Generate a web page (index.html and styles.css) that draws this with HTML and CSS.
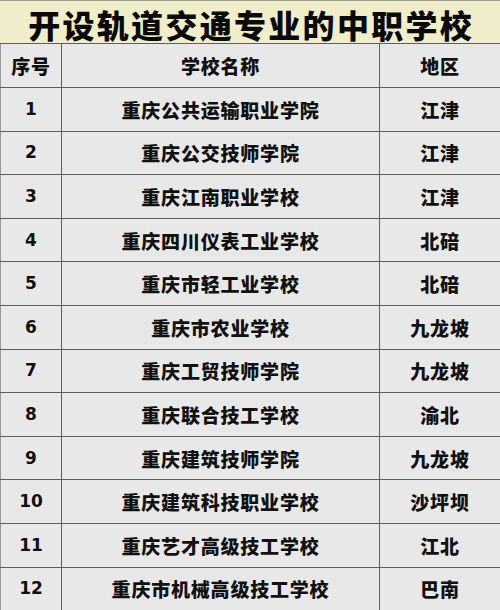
FILE: index.html
```html
<!DOCTYPE html>
<html lang="zh">
<head>
<meta charset="utf-8">
<link rel="stylesheet" href="styles.css">
</head>
<body>
<div class="sheet">
  <h1 class="title">开设轨道交通专业的中职学校</h1>
  <table class="schools">
    <colgroup><col class="c-no"><col class="c-name"><col class="c-area"></colgroup>
    <thead>
      <tr><th>序号</th><th>学校名称</th><th>地区</th></tr>
    </thead>
    <tbody>
      <tr><td class="num">1</td><td>重庆公共运输职业学院</td><td>江津</td></tr>
      <tr><td class="num">2</td><td>重庆公交技师学院</td><td>江津</td></tr>
      <tr><td class="num">3</td><td>重庆江南职业学校</td><td>江津</td></tr>
      <tr><td class="num">4</td><td>重庆四川仪表工业学校</td><td>北碚</td></tr>
      <tr><td class="num">5</td><td>重庆市轻工业学校</td><td>北碚</td></tr>
      <tr><td class="num">6</td><td>重庆市农业学校</td><td>九龙坡</td></tr>
      <tr><td class="num">7</td><td>重庆工贸技师学院</td><td>九龙坡</td></tr>
      <tr><td class="num">8</td><td>重庆联合技工学校</td><td>渝北</td></tr>
      <tr><td class="num">9</td><td>重庆建筑技师学院</td><td>九龙坡</td></tr>
      <tr><td class="num">10</td><td>重庆建筑科技职业学校</td><td>沙坪坝</td></tr>
      <tr><td class="num">11</td><td>重庆艺才高级技工学校</td><td>江北</td></tr>
      <tr><td class="num">12</td><td>重庆市机械高级技工学校</td><td>巴南</td></tr>
    </tbody>
  </table>
</div>
</body>
</html>
```
FILE: styles.css
```css
html, body {
  margin: 0;
  padding: 0;
  background: #e8e8e8;
}
.sheet {
  width: 500px;
  height: 610px;
  overflow: hidden;
  font-family: "Noto Sans CJK SC", "Noto Sans", sans-serif;
  color: #111;
}
.title {
  box-sizing: border-box;
  margin: 0;
  height: 43px;
  padding-top: 4px;
  border-top: 1px solid #9a9a90;
  background: #efedca;
  font-size: 32px;
  font-weight: 900;
  line-height: 38px;
  text-align: center;
  letter-spacing: 2.3px;
  text-indent: 2.3px;
  color: #0a0a0a;
}
.schools {
  width: 500px;
  border-collapse: collapse;
  table-layout: fixed;
  background: #e8e8e8;
}
.c-no { width: 61px; }
.c-name { width: 318px; }
.c-area { width: 121px; }
.schools th,
.schools td {
  border: 1px solid #5e5e5e;
  height: 42.6px;
  padding: 0;
  text-align: center;
  vertical-align: middle;
  font-size: 19px;
  font-weight: 900;
  letter-spacing: 0.8px;
  line-height: 1;
}
.schools th {
  height: 43px;
}
.schools tr > :first-child { border-left-color: #9a9a9a; }
.schools tr > :last-child { border-right-color: #9a9a9a; }
.schools td.num {
  font-family: "DejaVu Sans", Verdana, sans-serif;
  font-weight: 700;
  font-size: 17px;
  letter-spacing: 0;
}
```
